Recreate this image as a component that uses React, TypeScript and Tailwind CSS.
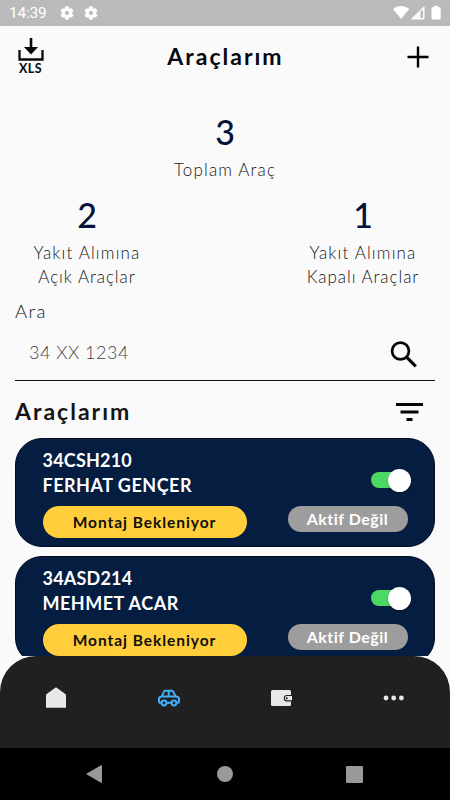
import React from 'react';

const vehicles = [
  { plate: '34CSH210', owner: 'FERHAT GENÇER' },
  { plate: '34ASD214', owner: 'MEHMET ACAR' },
];

function Gear() {
  return (
    <svg width="16" height="16" viewBox="0 0 24 24" fill="#fff" stroke="#fff" strokeWidth=".9">
      <path d="M19.14 12.94c.04-.3.06-.61.06-.94s-.02-.64-.07-.94l2.03-1.58a.49.49 0 0 0 .12-.61l-1.92-3.32a.49.49 0 0 0-.59-.22l-2.39.96a7 7 0 0 0-1.62-.94l-.36-2.54A.48.48 0 0 0 13.92 2.4h-3.84a.48.48 0 0 0-.47.41l-.36 2.54c-.59.24-1.13.57-1.62.94l-2.39-.96a.48.48 0 0 0-.59.22L2.74 8.87a.48.48 0 0 0 .12.61l2.03 1.58c-.05.3-.09.63-.09.94s.02.64.07.94l-2.03 1.58a.49.49 0 0 0-.12.61l1.92 3.32c.12.22.37.29.59.22l2.39-.96c.5.38 1.03.7 1.62.94l.36 2.54c.05.24.24.41.48.41h3.84c.24 0 .44-.17.47-.41l.36-2.54c.59-.24 1.13-.56 1.62-.94l2.39.96c.22.08.47 0 .59-.22l1.92-3.32a.48.48 0 0 0-.12-.61zM12 15.6a3.6 3.6 0 1 1 0-7.2 3.6 3.6 0 0 1 0 7.2z" />
    </svg>
  );
}

function StatusBar() {
  return (
    <div className="flex h-[26px] shrink-0 items-center bg-[#bababa] pb-px pl-[9px] pr-[8px]">
      <span className="w-[50px] pt-[2px] font-[Roboto] text-[15.5px] leading-none tracking-[-0.2px] text-white">14:39</span>
      <span className="flex gap-[8px]"><Gear /><Gear /></span>
      <svg className="ml-auto" width="49" height="15" viewBox="0 0 49 15" fill="#fff">
        <path d="M0 3.9C5 0 11.2 0 16.2 3.9L8.1 14z" />
        <path d="M31.5.8V14.5H17.5z" fillOpacity=".95" />
        <path d="M27.5 5.5v7.5h2.5V5.5z" fill="#bababa" />
        <path d="M41 .8h4v1.500h1.700q1 0 1 1v10.200q0 1-1 1h-7.200q-1 0-1-1V3.300q0-1 1-1H41z" />
      </svg>
    </div>
  );
}

function Header() {
  return (
    <header className="flex h-[61px] shrink-0 items-center justify-between pl-[17px] pr-[20px]">
      <div className="flex w-[27px] flex-col items-center">
        <svg width="26" height="23" viewBox="0 0 26 23">
          <path d="M1.500 12v9.500h23V12" fill="none" stroke="#080808" strokeWidth="2.300" />
          <path d="M13 0v11" stroke="#080808" strokeWidth="2.600" />
          <path d="M6 9h14l-7 7.500z" fill="#080808" />
        </svg>
        <span className="mt-[2px] text-[12.5px] font-bold leading-[12px] tracking-[0.4px] text-[#080808]">XLS</span>
      </div>
      <h1 className="mr-[-1px] text-[23px] font-bold leading-none tracking-[2px] text-[#080812]">Araçlarım</h1>
      <svg width="24" height="24" viewBox="0 0 24 24" stroke="#000" strokeWidth="2.400">
        <path d="M12 1.500v21M1.500 12h21" />
      </svg>
    </header>
  );
}

function Stat({ value, lines }: { value: string; lines: string[] }) {
  return (
    <div className="flex w-[144px] flex-col items-center">
      <span className="h-[44px] text-[34px] font-medium leading-[44px] text-[#061238]">{value}</span>
      <span className="mt-[4px] flex flex-col items-center text-[17px] font-light leading-[24px] text-[#151515]">
        {lines.map((line, index) => (
          <span key={line} className={index === 0 ? 'whitespace-nowrap tracking-[1.150px]' : 'whitespace-nowrap tracking-[0.950px]'}>{line}</span>
        ))}
      </span>
    </div>
  );
}

function VehicleCard({ plate, owner }: { plate: string; owner: string }) {
  return (
    <article className="flex h-[109px] shrink-0 justify-between rounded-[27px] border border-[#030c26] bg-[#051d40] pl-[26.500px] pr-[26.500px]">
      <div className="flex flex-col pt-[9px] text-[18px] font-bold leading-[25px] text-white">
        <span className="tracking-[0.200px]">{plate}</span>
        <span className="tracking-[0.500px]">{owner}</span>
        <span className="mt-[8px] flex h-[32px] w-[204px] items-center justify-center rounded-full bg-[#ffce3a] pt-px text-[15.500px] leading-none tracking-[0.950px] text-[#10100b]">Montaj Bekleniyor</span>
      </div>
      <div className="flex flex-col items-end pt-[30px]">
        <span className="mr-[-4px] flex h-[22px] w-[40.500px] items-center">
          <span className="flex h-4 w-[36px] items-center rounded-full bg-[#4bd963]">
            <span className="ml-[17px] h-[23px] w-[23px] shrink-0 rounded-full bg-white shadow-[0_1px_2px_rgba(0,0,0,0.35)]" />
          </span>
        </span>
        <span className="mt-[15px] flex h-[26px] w-[120px] items-center justify-center rounded-full bg-[#9d9d9d] text-[16px] font-bold leading-none tracking-[0.500px] text-white">Aktif Değil</span>
      </div>
    </article>
  );
}

function TabBar() {
  return (
    <nav className="grid h-[92px] shrink-0 grid-cols-4 justify-items-center rounded-t-[36px] bg-[#202020] pt-[30px]">
      <svg width="24" height="24" viewBox="0 0 24 24"><path d="M12 1.300 22 8.500v13.200H2V8.500z" fill="#e8e8e8" /></svg>
      <svg width="24" height="24" viewBox="0 0 24 24" fill="none" stroke="#43aefa" strokeWidth="2" strokeLinejoin="round">
        <path d="M4.500 16.700H3q-1 0-1-1V13q0-2 2-2.300l1-.4L6.700 6q.4-1.200 1.500-1.200h6.600q1.100 0 1.600 1.200l2.100 4.300 1.500.4q2 .4 2 2.300v2.700q0 1-1 1h-1.500M9.500 16.700h5M5 10.600h14M11.700 5v5" />
        <circle cx="7" cy="17" r="2.400" /><circle cx="17" cy="17" r="2.400" />
      </svg>
      <svg width="24" height="24" viewBox="0 0 24 24">
        <rect x="2" y="4" width="20" height="16" rx="1.500" fill="#e8e8e8" />
        <path d="M23 9.500h-5a2.700 2.700 0 0 0 0 5.400h5" fill="#e8e8e8" stroke="#202020" strokeWidth="1.100" />
        <circle cx="17.800" cy="12.200" r="1" fill="#202020" />
      </svg>
      <svg width="24" height="24" viewBox="0 0 24 24" fill="#e8e8e8">
        <circle cx="4" cy="12" r="2.400" /><circle cx="11.700" cy="12" r="2.400" /><circle cx="19.400" cy="12" r="2.400" />
      </svg>
    </nav>
  );
}

export default function App() {
  return (
    <div className="flex h-[800px] w-[450px] flex-col overflow-hidden bg-[#fafafa] font-['Lato','Noto_Sans',sans-serif]">
      <StatusBar />
      <Header />
      <section className="h-[212px] shrink-0 pt-[23px]">
        <div className="flex justify-center"><Stat value="3" lines={['Toplam Araç']} /></div>
        <div className="mt-[11px] flex justify-between px-[15px]">
          <Stat value="2" lines={['Yakıt Alımına', 'Açık Araçlar']} />
          <Stat value="1" lines={['Yakıt Alımına', 'Kapalı Araçlar']} />
        </div>
      </section>
      <section className="mx-[15px] shrink-0">
        <div className="h-[26px] text-[18.500px] font-light leading-[25px] tracking-[1.500px] text-[#151515]">Ara</div>
        <div className="flex h-[56px] items-center border-b border-[#111] pl-[14px] pr-[16px]">
          <span className="grow text-[18px] font-light tracking-[0.5px] text-[#444]">34 XX 1234</span>
          <svg width="30" height="30" viewBox="0 0 30 30" fill="none" stroke="#05050c">
            <circle cx="11.500" cy="13" r="8.400" strokeWidth="2.700" /><path d="m17.800 19.300 9 9" strokeWidth="3.200" />
          </svg>
        </div>
        <div className="flex h-[57px] items-center justify-between pr-[12px] pt-[3px]">
          <h2 className="text-[23px] font-bold leading-[30px] tracking-[2px] text-[#151515]">Araçlarım</h2>
          <svg width="27" height="19" viewBox="0 0 27 19" fill="#050505"><path d="M0 1h27v3H0zM4.500 8.500h18v3h-18zM10.500 16h6v3h-6z" /></svg>
        </div>
      </section>
      <main className="flex h-[218px] shrink-0 flex-col gap-[9px] overflow-hidden px-[15px]">
        {vehicles.map((vehicle) => <VehicleCard key={vehicle.plate} {...vehicle} />)}
      </main>
      <TabBar />
      <div className="flex h-[52px] shrink-0 items-center justify-between bg-black pl-[86px] pr-[87px]">
        <svg width="16" height="18" viewBox="0 0 16 18"><path d="M0 9 15 .3q1-.3 1 .7v16q0 1-1 .7z" fill="#999" /></svg>
        <span className="ml-[2px] h-4 w-4 rounded-full bg-[#999]" />
        <span className="h-[17px] w-[17px] rounded-[1px] bg-[#999]" />
      </div>
    </div>
  );
}
